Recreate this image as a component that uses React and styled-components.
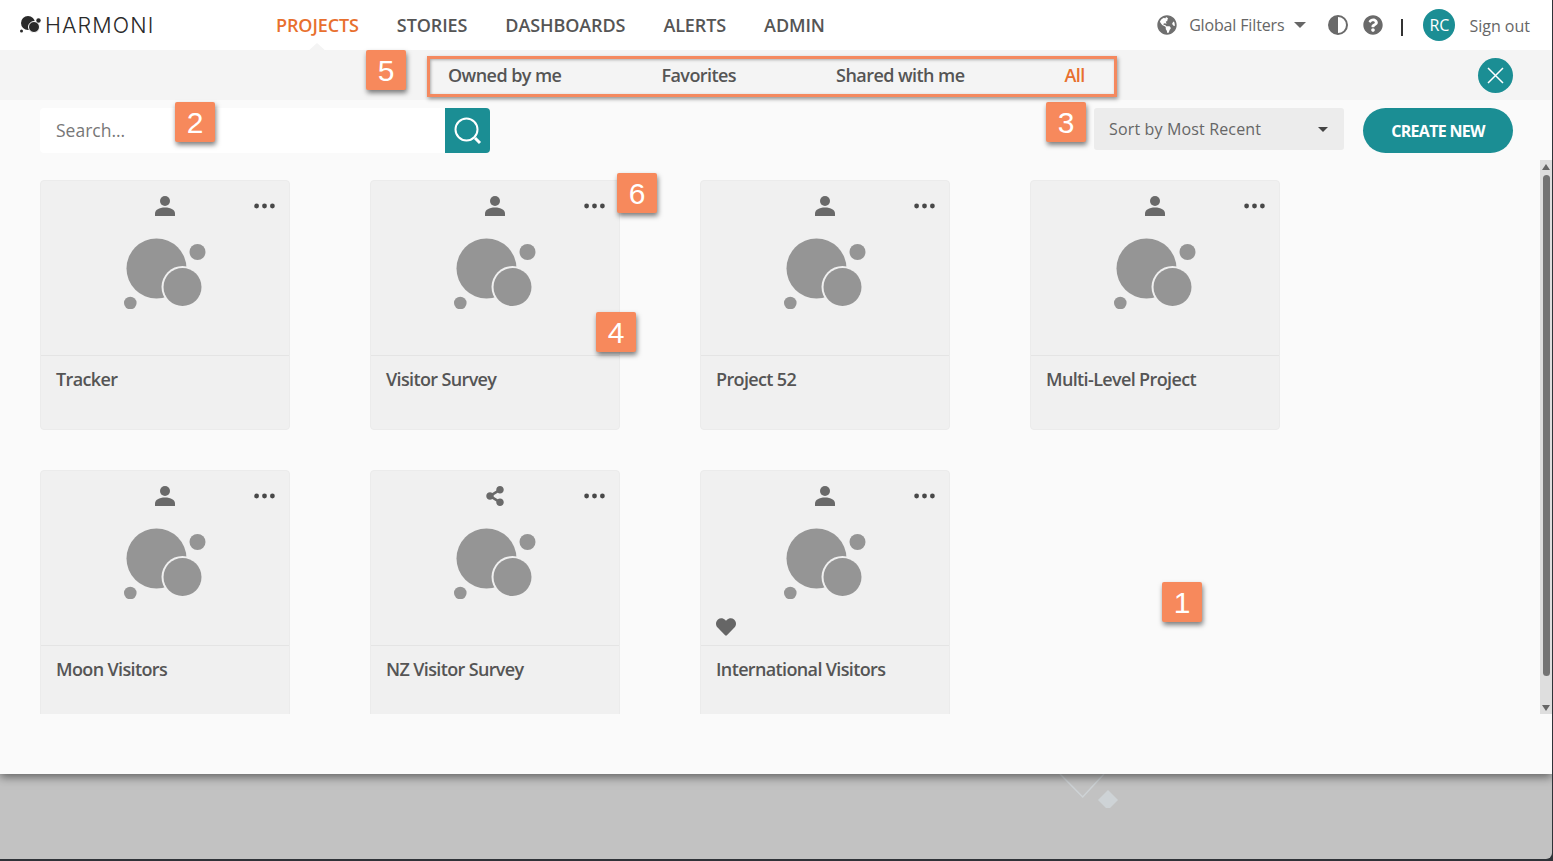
import React from "react";
import styled, { createGlobalStyle } from "styled-components";
import { FaGlobeAmericas, FaQuestionCircle, FaHeart, FaShareAlt } from "react-icons/fa";

const Global = createGlobalStyle`
  html, body { margin: 0; padding: 0; height: 100%; overflow: hidden; }
  body { font-family: "Open Sans", "Liberation Sans", sans-serif; background: #2f3338; }
  * { box-sizing: border-box; }
`;

const Page = styled.div`
  position: relative;
  width: 1553px;
  height: 861px;
  overflow: hidden;
`;
const Backdrop = styled.div`
  height: 859px;
  width: 1552px;
  background: #c2c2c2;
  border-bottom-right-radius: 6px;
  overflow: hidden;
`;
const Modal = styled.div`
  position: relative;
  z-index: 1;
  height: 774px;
  background: #fafafa;
  display: flex;
  flex-direction: column;
  box-shadow: 0 3px 9px rgba(0, 0, 0, 0.5);
`;
const TopNav = styled.header`
  position: relative;
  height: 50px;
  flex: none;
  background: #fff;
  display: flex;
  align-items: center;
  padding: 0 22px 0 20px;
`;
const Logo = styled.div`
  display: flex;
  align-items: center;
  width: 256px;
  gap: 3px;
`;
const LogoText = styled.span`
  font-family: "Inter", sans-serif;
  font-weight: 300;
  font-size: 21.5px;
  letter-spacing: 1.1px;
  color: #2a2a2a;
`;
const NavLinks = styled.nav`
  display: flex;
  gap: 38px;
`;
const NavLink = styled.span`
  position: relative;
  font-size: 18px;
  font-weight: 600;
  letter-spacing: -0.1px;
  color: ${(p) => (p.$active ? "#e8702e" : "#555")};
`;
const Notch = styled.span`
  position: absolute;
  left: 50%;
  bottom: -15px;
  margin-left: -10px;
  border-left: 10px solid transparent;
  border-right: 10px solid transparent;
  border-bottom: 9px solid #f4f4f4;
`;
const NavRight = styled.div`
  margin-left: auto;
  display: flex;
  align-items: center;
  color: #666;
  font-size: 16px;
`;
const Globe = styled(FaGlobeAmericas)`
  font-size: 20px;
  color: #6f6f6f;
  margin-right: 12px;
`;
const Caret = styled.span`
  width: 0;
  height: 0;
  border-left: ${(p) => p.$size || 6}px solid transparent;
  border-right: ${(p) => p.$size || 6}px solid transparent;
  border-top: ${(p) => p.$size || 6}px solid ${(p) => p.$color || "#666"};
  margin-left: 10px;
`;
const FiltersLabel = styled.span`
  letter-spacing: -0.15px;
`;
const ContrastIcon = styled.svg`
  width: 20px;
  height: 20px;
  margin-left: 22px;
`;
const HelpIcon = styled(FaQuestionCircle)`
  font-size: 20px;
  color: #6a6a6a;
  margin-left: 15px;
`;
const Divider = styled.span`
  width: 2px;
  height: 17px;
  background: #333;
  margin: 4px 20px 0 18px;
`;
const Avatar = styled.span`
  width: 32px;
  height: 32px;
  border-radius: 50%;
  background: #1b8e94;
  color: #fff;
  font-size: 16px;
  display: flex;
  align-items: center;
  justify-content: center;
`;
const SignOut = styled.span`
  margin-left: 14px;
  position: relative;
  top: 1px;
`;
const SubBar = styled.div`
  height: 50px;
  flex: none;
  background: #f4f4f4;
  display: flex;
  align-items: center;
  padding: 0 39px 0 448px;
`;
const Tab = styled.span`
  font-size: 18px;
  font-weight: 600;
  letter-spacing: -0.56px;
  margin-right: 100px;
  color: ${(p) => (p.$active ? "#e8702e" : "#555")};
`;
const Close = styled.button`
  margin-left: auto;
  width: 35px;
  height: 35px;
  border: 0;
  padding: 0;
  border-radius: 50%;
  background: #1b8e94;
  display: flex;
  align-items: center;
  justify-content: center;
`;
const Toolbar = styled.div`
  height: 60px;
  flex: none;
  padding: 8px 39px 0 40px;
  display: flex;
  align-items: flex-start;
`;
const SearchBox = styled.div`
  width: 450px;
  height: 45px;
  background: #fff;
  border-radius: 4px;
  display: flex;
  align-items: center;
  justify-content: space-between;
  padding-left: 16px;
  overflow: hidden;
`;
const Placeholder = styled.span`
  font-size: 17.5px;
  color: #777;
  position: relative;
  top: -1px;
`;
const SearchBtn = styled.span`
  width: 45px;
  height: 45px;
  background: #1b8e94;
  display: flex;
  align-items: center;
  justify-content: center;
`;
const SortSelect = styled.div`
  margin-left: auto;
  width: 250px;
  height: 42px;
  background: #ececec;
  border-radius: 3px;
  padding: 0 16px 0 15px;
  display: flex;
  align-items: center;
  justify-content: space-between;
  font-size: 16px;
  letter-spacing: 0.15px;
  color: #666;
`;
const CreateBtn = styled.button`
  margin-left: 19px;
  width: 150px;
  height: 45px;
  border: 0;
  border-radius: 23px;
  background: #1b8e94;
  color: #fff;
  font-family: inherit;
  font-size: 16px;
  font-weight: 700;
  letter-spacing: -0.7px;
  padding-top: 2px;
`;
const ScrollArea = styled.div`
  position: relative;
  height: 554px;
  flex: none;
  overflow: hidden;
`;
const Grid = styled.div`
  padding: 20px 40px;
  display: grid;
  grid-template-columns: repeat(4, 250px);
  column-gap: 80px;
  row-gap: 40px;
`;
const Card = styled.article`
  position: relative;
  height: 250px;
  background: #f0f0f0;
  border: 1px solid #ebebeb;
  border-radius: 4px;
`;
const CardTop = styled.div`
  height: 175px;
  border-bottom: 1px solid #e4e4e4;
  display: flex;
  flex-direction: column;
  align-items: center;
  padding-top: 15px;
`;
const OwnerRow = styled.div`
  width: 100%;
  height: 20px;
  display: grid;
  grid-template-columns: 1fr 20px 1fr;
  align-items: center;
  justify-items: center;
`;
const More = styled.svg`
  width: 21px;
  height: 6px;
  justify-self: end;
  margin-right: 14px;
`;
const Share = styled(FaShareAlt)`
  font-size: 20px;
  color: #6a6a6a;
`;
const Bubbles = styled.svg`
  width: 82px;
  height: 72px;
  margin-top: 21px;
`;
const Heart = styled(FaHeart)`
  position: absolute;
  left: 15px;
  top: 146px;
  font-size: 20px;
  color: #666;
`;
const CardTitle = styled.h3`
  margin: 0;
  padding: 11px 15px;
  font-size: 18px;
  font-weight: 600;
  line-height: 25px;
  letter-spacing: -0.64px;
  color: #555;
`;
const ScrollTrack = styled.div`
  position: absolute;
  right: 0;
  top: 0;
  bottom: 0;
  width: 12px;
  background: #dedede;
  display: flex;
  flex-direction: column;
  align-items: center;
  padding: 4px 0 3px;
`;
const ThumbLane = styled.div`
  flex: 1;
  display: flex;
  padding: 5px 0 29px;
`;
const Thumb = styled.div`
  width: 7px;
  border-radius: 4px;
  background: #747474;
`;
const ArrowUp = styled.span`
  border-left: 4px solid transparent;
  border-right: 4px solid transparent;
  border-bottom: 6px solid #666;
`;
const ArrowDown = styled.span`
  border-left: 4px solid transparent;
  border-right: 4px solid transparent;
  border-top: 6px solid #666;
`;
const BackdropMark = styled.svg`
  position: absolute;
  left: 1055px;
  top: 774px;
  width: 70px;
  height: 40px;
`;
const Badge = styled.div`
  position: absolute;
  z-index: 3;
  left: ${(p) => p.$x}px;
  top: ${(p) => p.$y}px;
  width: 40px;
  height: 40px;
  border-radius: 2px;
  background: #f7895c;
  color: #fff;
  font-family: "Liberation Sans", sans-serif;
  font-size: 30px;
  line-height: 41px;
  text-align: center;
  box-shadow: 1px 3px 5px rgba(0, 0, 0, 0.5);
`;
const Highlight = styled.div`
  position: absolute;
  z-index: 3;
  left: 427px;
  top: 56px;
  width: 690px;
  height: 41px;
  border: 3px solid #f4895f;
  box-shadow: 1px 2px 4px rgba(0, 0, 0, 0.4), inset 1px 1px 3px rgba(0, 0, 0, 0.3);
`;

const PersonGlyph = () => (
  <svg width="20" height="20" viewBox="0 0 20 20">
    <circle cx="10" cy="5" r="5" fill="#6a6a6a" />
    <path d="M0 20v-2.5C0 14 4 11.5 10 11.5s10 2.500 10 6V20z" fill="#6a6a6a" />
  </svg>
);
const BubbleGlyph = () => (
  <Bubbles viewBox="0 0 82 72">
    <circle cx="32.500" cy="31.500" r="30" fill="#959595" />
    <circle cx="58.500" cy="50" r="21" fill="#f0f0f0" />
    <circle cx="58.500" cy="50" r="19" fill="#959595" />
    <circle cx="73.500" cy="15" r="8" fill="#959595" />
    <circle cx="6.300" cy="66" r="6.300" fill="#959595" />
  </Bubbles>
);

const projects = [
  { name: "Tracker" },
  { name: "Visitor Survey" },
  { name: "Project 52" },
  { name: "Multi-Level Project" },
  { name: "Moon Visitors" },
  { name: "NZ Visitor Survey", shared: true },
  { name: "International Visitors", favorite: true },
];
const badges = [
  { n: 1, x: 1162, y: 582 },
  { n: 2, x: 175, y: 102 },
  { n: 3, x: 1046, y: 102 },
  { n: 4, x: 596, y: 312 },
  { n: 5, x: 366, y: 50 },
  { n: 6, x: 617, y: 173 },
];

export default function App() {
  return (
    <Page>
      <Global />
      <Backdrop>
        <Modal>
          <TopNav>
            <Logo>
              <svg width="22" height="18" viewBox="0 0 22 18">
                <circle cx="8" cy="7" r="7" fill="#2a2a2a" />
                <circle cx="14" cy="11" r="5.500" fill="#2a2a2a" stroke="#fff" strokeWidth="1" />
                <circle cx="18.500" cy="4.500" r="2.200" fill="#2a2a2a" />
                <circle cx="1.500" cy="15" r="1.500" fill="#2a2a2a" />
              </svg>
              <LogoText>HARMONI</LogoText>
            </Logo>
            <NavLinks>
              <NavLink $active>
                PROJECTS
                <Notch />
              </NavLink>
              <NavLink>STORIES</NavLink>
              <NavLink>DASHBOARDS</NavLink>
              <NavLink>ALERTS</NavLink>
              <NavLink>ADMIN</NavLink>
            </NavLinks>
            <NavRight>
              <Globe />
              <FiltersLabel>Global Filters</FiltersLabel>
              <Caret />
              <ContrastIcon viewBox="0 0 20 20">
                <circle cx="10" cy="10" r="9" fill="#fff" stroke="#6a6a6a" strokeWidth="2" />
                <path d="M10 1a9 9 0 0 0 0 18z" fill="#6a6a6a" />
              </ContrastIcon>
              <HelpIcon />
              <Divider />
              <Avatar>RC</Avatar>
              <SignOut>Sign out</SignOut>
            </NavRight>
          </TopNav>
          <SubBar>
            <Tab>Owned by me</Tab>
            <Tab>Favorites</Tab>
            <Tab>Shared with me</Tab>
            <Tab $active>All</Tab>
            <Close aria-label="Close">
              <svg width="17" height="17" viewBox="0 0 17 17">
                <path d="M1 1l15 15M16 1L1 16" stroke="#fff" strokeWidth="1.500" />
              </svg>
            </Close>
          </SubBar>
          <Toolbar>
            <SearchBox>
              <Placeholder>Search...</Placeholder>
              <SearchBtn>
                <svg width="30" height="30" viewBox="0 0 30 30" fill="none" stroke="#fff">
                  <circle cx="13.500" cy="13.500" r="11" strokeWidth="2" />
                  <path d="M22 22l5 5" strokeWidth="3" />
                </svg>
              </SearchBtn>
            </SearchBox>
            <SortSelect>
              Sort by Most Recent
              <Caret $color="#444" $size={5} />
            </SortSelect>
            <CreateBtn>CREATE NEW</CreateBtn>
          </Toolbar>
          <ScrollArea>
            <Grid>
              {projects.map((p) => (
                <Card key={p.name}>
                  <CardTop>
                    <OwnerRow>
                      <span />
                      {p.shared ? <Share /> : <PersonGlyph />}
                      <More viewBox="0 0 21 6">
                        <circle cx="2.600" cy="3" r="2.400" fill="#484848" />
                        <circle cx="10.500" cy="3" r="2.400" fill="#484848" />
                        <circle cx="18.400" cy="3" r="2.400" fill="#484848" />
                      </More>
                    </OwnerRow>
                    <BubbleGlyph />
                  </CardTop>
                  {p.favorite && <Heart />}
                  <CardTitle>{p.name}</CardTitle>
                </Card>
              ))}
            </Grid>
            <ScrollTrack>
              <ArrowUp />
              <ThumbLane>
                <Thumb />
              </ThumbLane>
              <ArrowDown />
            </ScrollTrack>
          </ScrollArea>
        </Modal>
        <BackdropMark viewBox="0 0 70 40">
          <path d="M5 0l22.700 23L49 0" fill="none" stroke="#ced3d6" strokeWidth="1.500" />
          <path d="M53 16l10 10-8 8h-4l-8-8z" fill="#ced3d6" />
        </BackdropMark>
      </Backdrop>
      {badges.map((b) => (
        <Badge key={b.n} $x={b.x} $y={b.y}>
          {b.n}
        </Badge>
      ))}
      <Highlight />
    </Page>
  );
}
